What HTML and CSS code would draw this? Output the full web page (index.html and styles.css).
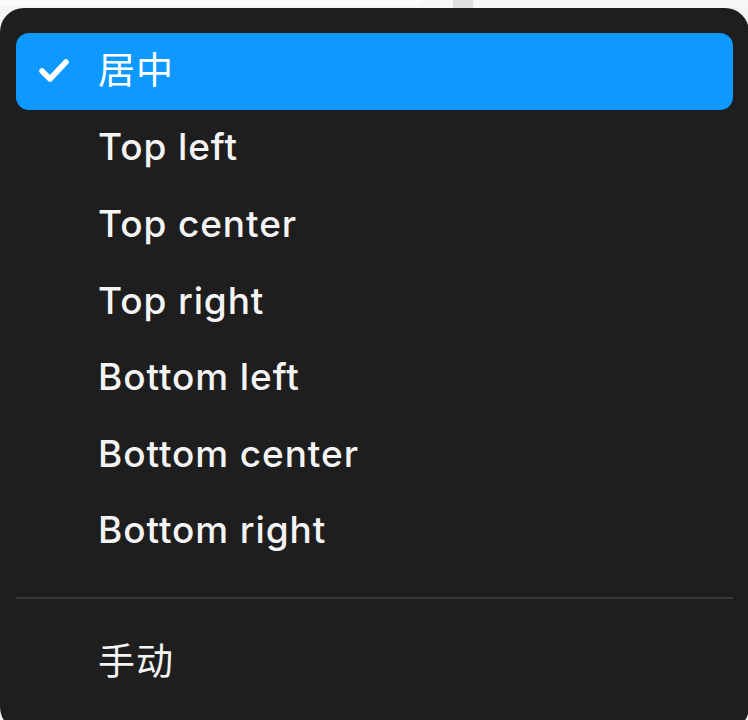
FILE: index.html
```html
<!DOCTYPE html>
<html lang="zh">
<head>
  <meta charset="UTF-8" />
  <meta name="viewport" content="width=device-width, initial-scale=1.0" />
  <title>Position menu</title>
  <link rel="stylesheet" href="styles.css">
</head>
<body>
  <div class="backdrop">
    <div class="backdrop-tab"></div>
    <div class="backdrop-bar"></div>
  </div>

  <div class="menu">
    <div class="item selected">
      <span class="check">
        <svg width="30" height="24" viewBox="0 0 30 24">
          <polyline points="3,12 11,20 27,3" fill="none" stroke="#fff" stroke-width="5.5" stroke-linecap="round" stroke-linejoin="round" />
        </svg>
      </span>
      <span class="label cjk">居中</span>
    </div>
    <div class="item"><span class="check"></span><span class="label">Top left</span></div>
    <div class="item"><span class="check"></span><span class="label">Top center</span></div>
    <div class="item"><span class="check"></span><span class="label">Top right</span></div>
    <div class="item"><span class="check"></span><span class="label">Bottom left</span></div>
    <div class="item"><span class="check"></span><span class="label">Bottom center</span></div>
    <div class="item"><span class="check"></span><span class="label">Bottom right</span></div>

    <div class="separator"></div>

    <div class="item"><span class="check"></span><span class="label cjk">手动</span></div>
  </div>
</body>
</html>
```

FILE: styles.css
```css
html, body {
  margin: 0;
  padding: 0;
  overflow: hidden;
}
body {
  background: #f4f4f4;
  font-family: Inter, "Noto Sans CJK SC", sans-serif;
  width: 748px;
  height: 720px;
}
.backdrop {
  height: 8px;
  background: #f6f6f6;
  position: relative;
}
.backdrop-tab {
  position: absolute;
  left: 0;
  top: 0;
  width: 422px;
  height: 6px;
  background: #fbfbfb;
  border-bottom-right-radius: 6px;
}
.backdrop-bar {
  position: absolute;
  left: 453px;
  top: 0;
  width: 20px;
  height: 8px;
  background: #dedede;
}
.menu {
  background: #1e1e1e;
  border-radius: 24px;
  padding: 25px 16px 30px;
  width: 749px;
  box-sizing: border-box;
  color: #f4f4f4;
}
.item {
  display: flex;
  align-items: center;
  height: 76.6px;
  border-radius: 13px;
  font-size: 37px;
  font-weight: 500;
  letter-spacing: 0.9px;
}
.item.selected {
  background: #0d99ff;
  color: #fff;
}
.check {
  width: 82px;
  flex-shrink: 0;
  display: flex;
  align-items: center;
  padding-left: 23px;
  box-sizing: border-box;
}
.check svg {
  display: block;
}
.label {
  line-height: 1;
  padding-bottom: 2px;
}
.label.cjk {
  font-weight: 400;
}
.separator {
  height: 2px;
  background: #383838;
  margin: 28px 0 25px;
}
```
